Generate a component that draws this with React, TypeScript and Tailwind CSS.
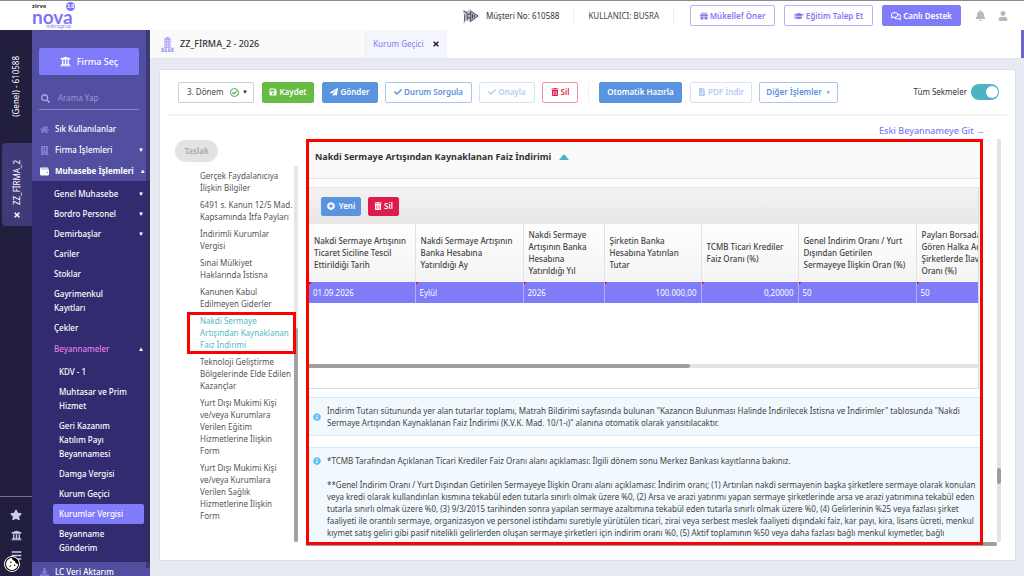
import type { ReactNode } from "react";
import {
  FaBars,
  FaBell,
  FaBuilding,
  FaCheck,
  FaCookieBite,
  FaDownload,
  FaFilePdf,
  FaGift,
  FaGraduationCap,
  FaHome,
  FaInfoCircle,
  FaPaperPlane,
  FaPlusCircle,
  FaRegCheckCircle,
  FaRegComments,
  FaSave,
  FaSearch,
  FaStar,
  FaTimes,
  FaTrashAlt,
  FaUniversity,
  FaUser,
  FaWallet,
} from "react-icons/fa";

const menu = [
  { label: "Genel Muhasebe", arrow: "▼" },
  { label: "Bordro Personel", arrow: "▼" },
  { label: "Demirbaşlar", arrow: "▼" },
  { label: "Cariler" },
  { label: "Stoklar" },
  { label: "Gayrimenkul Kayıtları" },
  { label: "Çekler" },
];

const declarations = [
  "KDV - 1",
  "Muhtasar ve Prim Hizmet",
  "Geri Kazanım Katılım Payı Beyannamesi",
  "Damga Vergisi",
  "Kurum Geçici",
  "Kurumlar Vergisi",
  "Beyanname Gönderim",
];

const sections = [
  "Gerçek Faydalanıcıya İlişkin Bilgiler",
  "6491 s. Kanun 12/5 Mad. Kapsamında İtfa Payları",
  "İndirimli Kurumlar Vergisi",
  "Sınai Mülkiyet Haklarında İstisna",
  "Kanunen Kabul Edilmeyen Giderler",
  "Nakdi Sermaye Artışından Kaynaklanan Faiz İndirimi",
  "Teknoloji Geliştirme Bölgelerinde Elde Edilen Kazançlar",
  "Yurt Dışı Mukimi Kişi ve/veya Kurumlara Verilen Eğitim Hizmetlerine İlişkin Form",
  "Yurt Dışı Mukimi Kişi ve/veya Kurumlara Verilen Sağlık Hizmetlerine İlişkin Form",
];

const columns = [
  { title: "Nakdi Sermaye Artışının Ticaret Siciline Tescil Ettirildiği Tarih", value: "01.09.2026", width: "w-[106px]" },
  { title: "Nakdi Sermaye Artışının Banka Hesabına Yatırıldığı Ay", value: "Eylül", width: "w-[108px]" },
  { title: "Nakdi Sermaye Artışının Banka Hesabına Yatırıldığı Yıl", value: "2026", width: "w-[81px]" },
  { title: "Şirketin Banka Hesabına Yatırılan Tutar", value: "100.000,00", width: "w-[97px]", right: true },
  { title: "TCMB Ticari Krediler Faiz Oranı (%)", value: "0,20000", width: "w-[97px]", right: true },
  { title: "Genel İndirim Oranı / Yurt Dışından Getirilen Sermayeye İlişkin Oran (%)", value: "50", width: "w-[118px]" },
  { title: "Payları\u00a0Borsada\u00a0İşlem Gören Halka\u00a0Açık Şirketlerde İlave Oranı\u00a0(%)", value: "50", width: "w-[86px]" },
];

function Button({ className, children, disabled }: { className: string; children: ReactNode; disabled?: boolean }) {
  return (
    <button
      type="button"
      disabled={disabled}
      className={`flex shrink-0 items-center justify-center gap-0.5 rounded-xs border font-semibold whitespace-nowrap ${className}`}>
      {children}
    </button>
  );
}

function Header() {
  return (
    <header className="flex h-[30px] shrink-0 items-center border-t border-[#8a8a8a] bg-white pr-4 pl-8">
      <a href="#" aria-label="zirve nova mikrogrup" className="relative flex h-7 w-[43px] flex-col text-[#7b76f5]">
        <span className="text-[6px] leading-[8px] font-bold text-[#333]">zirve</span>
        <span className="font-[Lato,sans-serif] text-[19px] leading-[13px] font-bold">nova</span>
        <span className="self-end pr-1 text-[5px] leading-[7px]">mikrogrup</span>
        <span className="absolute top-0 right-0 flex size-[9px] items-center justify-center rounded-full bg-[#7b76f5] text-[5px] leading-[6px] font-bold text-white">
          3.0
        </span>
      </a>

      <div className="ml-auto flex items-center">
        <svg viewBox="0 0 54 48" className="mr-1.5 h-4 w-[18px]">
          <path d="M3 6l12 4 9-6 27 20-27 20-6-9-6 2-4 9H4l3-18z" fill="#c4bdd2" />
          <path d="M5 10l10 4 1 24M8 20v20M26 10v30L48 24z" fill="none" stroke="#5a5265" strokeWidth="3" />
          <path d="M17 20l9-4M17 28l9 3M31 18v14M37 21v7" fill="none" stroke="#37303f" strokeWidth="3" />
        </svg>
        <span className="border-r border-[#eeeef3] py-1 pr-3.5 text-[#333]">Müşteri No: 610588</span>
        <span className="border-r border-[#eeeef3] px-3.5 py-1 text-[#444]">KULLANICI: BUSRA</span>
        <div className="ml-4 flex gap-[9px]">
          <Button className="h-[21px] w-[85px] border-[#b5b2fa] text-[#807bf8]">
            <FaGift /> Mükellef Öner
          </Button>
          <Button className="h-[21px] w-[89px] border-[#b5b2fa] text-[#807bf8]">
            <FaGraduationCap className="size-[10px]" /> Eğitim Talep Et
          </Button>
          <Button className="h-[21px] w-[79px] border-[#807bf8] bg-[#807bf8] text-white">
            <FaRegComments className="size-[10px]" /> Canlı Destek
          </Button>
        </div>
        <button type="button" aria-label="Bildirimler" className="ml-3.5 text-[#b4b9c6]">
          <FaBell className="size-[11px]" />
        </button>
        <button type="button" aria-label="Hesap" className="ml-3 text-[#b4b9c6]">
          <FaUser className="size-[10px]" />
        </button>
      </div>
    </header>
  );
}

function Rail() {
  return (
    <nav className="relative flex w-8 shrink-0 flex-col bg-[#211f3d] text-white">
      <a href="#" className="flex h-[113px] items-center justify-center">
        <span className="rotate-180 [writing-mode:vertical-rl]">(Genel) - 610588</span>
      </a>
      <div className="ml-0.5 flex h-[83px] flex-col items-center justify-end gap-1.5 rounded-l-sm bg-[#3f3b79] pb-[7px]">
        <span className="rotate-180 [writing-mode:vertical-rl]">ZZ_FİRMA_2</span>
        <button type="button" aria-label="Sekmeyi kapat">
          <FaTimes />
        </button>
      </div>
      <div className="mt-auto flex h-20 flex-col items-center gap-[9px] border-t border-[#77758c] pt-3 text-[#c9cbf5]">
        <FaStar className="size-3" />
        <FaUniversity className="size-[11px]" />
        <FaBars className="size-[11px]" />
      </div>
      <button
        type="button"
        aria-label="Çerezler"
        className="absolute bottom-1 left-1 flex size-4 items-center justify-center rounded-full border border-white bg-black">
        <FaCookieBite className="size-3" />
      </button>
    </nav>
  );
}

function Sidebar() {
  return (
    <aside className="relative w-[118px] shrink-0 overflow-hidden bg-[#534fa0] pt-[18px] leading-[14px] text-white">
      <div className="pr-[11px] pl-[7px]">
        <button
          type="button"
          className="flex h-[27px] w-full items-center justify-center gap-1.5 rounded-xs bg-[#807bf8] text-[9px] font-medium">
          <FaUniversity className="size-[11px]" /> Firma Seç
        </button>
        <label className="mt-3 mb-2 flex h-[23px] items-center gap-2 border-b border-[#8682c8] px-0.5 text-[#a9a6e0]">
          <FaSearch className="size-[9px] shrink-0" />
          <input type="text" placeholder="Arama Yap" className="w-full min-w-0 outline-none placeholder:text-[#9a97dc]" />
        </label>
      </div>

      <ul className="pr-1.5 pl-2 font-medium">
        <li className="flex items-center gap-1.5 pt-1 pb-[3px]">
          <FaHome className="size-[9px] text-[#8480d8]" />
          <a href="#">Sık Kullanılanlar</a>
        </li>
        <li className="flex items-center gap-1.5 pt-1 pb-[3px]">
          <FaBuilding className="size-[9px] text-[#8480d8]" />
          <a href="#">Firma İşlemleri</a>
          <span className="ml-auto text-[6px]">▼</span>
        </li>
        <li className="flex items-center gap-1.5 pt-1 pb-[3px] font-bold whitespace-nowrap">
          <FaWallet className="size-[9px] shrink-0" />
          <a href="#">Muhasebe İşlemleri</a>
          <span className="ml-auto text-[6px]">▲</span>
        </li>
      </ul>

      <ul className="bg-[#322b70] pt-[3px] pr-1.5 pb-1 pl-[22px] font-medium">
        {menu.map((item) => (
          <li key={item.label} className="flex items-center justify-between py-[3px]">
            <a href="#" className="max-w-[72px]">{item.label}</a>
            {item.arrow && <span className="text-[6px]">{item.arrow}</span>}
          </li>
        ))}
        <li>
          <div className="flex items-center justify-between pt-1 pb-[3px]">
            <a href="#" className="text-[#e27be8]">Beyannameler</a>
            <span className="text-[6px]">▲</span>
          </div>
          <ul className="-ml-px pt-[3px]">
            {declarations.map((label) => (
              <li key={label}>
                <a
                  href="#"
                  className={`block rounded-xs py-[3px] pr-2.5 pl-1.5 ${label === "Kurumlar Vergisi" ? "bg-[#807bf8]" : ""}`}>
                  {label}
                </a>
              </li>
            ))}
          </ul>
        </li>
      </ul>

      <a href="#" className="flex items-center gap-1.5 px-2 pt-[3px] pb-1 font-medium">
        <FaDownload className="size-[9px] text-[#8480d8]" />
        LC Veri Aktarım
      </a>
      {/* Scroll thumb */}
      <div className="absolute top-0 right-0 bottom-2 w-1 bg-[#2f2b58]/60" />
    </aside>
  );
}

function TabBar() {
  return (
    <div className="flex h-[29px] shrink-0 items-stretch border-b border-[#e2e3ea] border-l border-l-white bg-white">
      <div className="flex w-[215px] items-center gap-1.5 border-r border-[#eeeef3] bg-[#fafafa] pl-2.5 text-[9px] font-medium text-[#333]">
        <svg viewBox="0 0 39 45" className="h-[15px] w-[13px]" fill="#b0acf5">
          <path d="M10 4h5V0h9v4h5v29H10z" />
          <path d="M1 32h8v9H1zm29 0h8v9h-8zM0 42h39v3H0zM11 34h7v8h-7zm10 0h7v8h-7z" />
          <path d="M13 9h3v4h-3zm5 0h3v4h-3zm5 0h3v4h-3zm-10 8h3v4h-3zm5 0h3v4h-3zm5 0h3v4h-3zm-10 8h3v4h-3zm5 0h3v4h-3zm5 0h3v4h-3z" fill="#e3e1fd" />
        </svg>
        ZZ_FİRMA_2 - 2026
      </div>
      <div className="flex items-center gap-2 bg-[#f5f6fd] px-[7px] font-medium text-[#8d89f5]">
        Kurum Geçici
        <button type="button" aria-label="Kapat" className="text-[#222]">
          <FaTimes />
        </button>
      </div>
      <div className="ml-auto w-[3px] bg-[#6c67c4]" />
    </div>
  );
}

function Toolbar() {
  return (
    <div className="mx-2 flex h-[46px] shrink-0 items-center gap-[7px] border-b-2 border-[#f3f3f5] pr-2 pl-2.5">
      <div className="relative mr-px flex items-center">
        <select
          aria-label="Dönem"
          className="h-[21px] w-[76px] appearance-none rounded-xs border border-[#cfcfcf] bg-white pl-2 text-[#444]">
          <option>3. Dönem</option>
        </select>
        <FaRegCheckCircle className="pointer-events-none absolute right-[15px] size-[9px] text-[#3a9a3a]" />
        <span className="pointer-events-none absolute right-1.5 text-[6px] text-[#333]">▼</span>
      </div>
      <Button className="mr-px h-[21px] w-[52px] border-[#66bc45] bg-[#66bc45] text-white">
        <FaSave /> Kaydet
      </Button>
      <Button className="h-[21px] w-14 border-[#5a93de] bg-[#5a93de] text-white">
        <FaPaperPlane /> Gönder
      </Button>
      <Button className="h-[21px] w-[87px] border-[#a9c6f0] text-[#5a93de]">
        <FaCheck /> Durum Sorgula
      </Button>
      <Button disabled className="h-[21px] w-14 border-[#d5e3f7] text-[#b3cdf1]">
        <FaCheck /> Onayla
      </Button>
      <Button className="h-[21px] w-9 border-[#f094aa] text-[#dc2450]">
        <FaTrashAlt /> Sil
      </Button>
      <div className="mx-[3px] h-5 w-px bg-[#f0f0f0]" />
      <Button className="mr-px h-[21px] w-[83px] border-[#5a93de] bg-[#5a93de] text-white">Otomatik Hazırla</Button>
      <Button disabled className="h-[21px] w-[62px] border-[#d5e3f7] text-[#b3cdf1]">
        <FaFilePdf /> PDF İndir
      </Button>
      <Button className="h-[21px] w-[79px] border-[#a9c6f0] text-[#5a93de]">
        Diğer İşlemler <span className="ml-0.5 text-[5px]">▼</span>
      </Button>
      <label className="ml-auto flex items-center gap-1 whitespace-nowrap text-[#333]">
        Tüm Sekmeler
        <input
          type="checkbox"
          defaultChecked
          className="relative h-4 w-7 appearance-none rounded-full bg-[#4cb3c5] before:absolute before:top-[2px] before:right-px before:size-3 before:rounded-full before:bg-white"
        />
      </label>
    </div>
  );
}

function SectionList() {
  return (
    <div className="flex w-[138px] shrink-0 flex-col pt-px">
      <span className="ml-[15px] flex h-[22px] w-[43px] shrink-0 items-center justify-center rounded-full bg-[#e3e3e3] font-semibold text-[#a5a5a5]">
        Taslak
      </span>
      <div className="mt-1 flex min-h-0 flex-1 justify-between">
        <ul className="ml-10 flex w-[93px] flex-col gap-[5px] pt-1 leading-[12px] text-[#555]">
          {sections.map((label, i) => (
            <li key={label} className="relative">
              <a href="#" className={i === 5 ? "text-[#53b9ca]" : ""}>{label}</a>
              {i === 5 && <span className="absolute -inset-y-[3px] -right-[3px] -left-[13px] z-10 border-[3px] border-[#fe0000]" />}
            </li>
          ))}
        </ul>
        <div className="mb-1 flex w-1 shrink-0 flex-col justify-end bg-[#e6e6e6]">
          <div className="h-[57%] rounded-full bg-[#a0a0a0]" />
        </div>
      </div>
    </div>
  );
}

function Grid() {
  return (
    <div className="mr-px border-r border-b border-[#dddddd]">
      <div className="flex h-[37px] items-center gap-[7px] border-t border-[#e4e4e4] bg-linear-to-b from-[#f3f3f3] to-[#e8e7e8] pl-3">
        <Button className="h-[19px] w-10 border-[#5a93de] bg-[#5a93de] text-white">
          <FaPlusCircle className="mr-0.5" /> Yeni
        </Button>
        <Button className="h-[19px] w-[31px] border-[#dc1c4c] bg-[#dc1c4c] text-white">
          <FaTrashAlt /> Sil
        </Button>
      </div>
      <div className="h-[140px] overflow-hidden">
        <table className="w-[693px] table-fixed border-collapse text-left">
          <thead>
            <tr className="h-[58px] bg-linear-to-b from-[#fefefe] to-[#f4f4f4]">
              {columns.map((c) => (
                <th
                  key={c.title}
                  className={`border-r border-[#e2e2e2] px-[5px] leading-[12px] font-medium text-[#444] ${c.width}`}>
                  {c.title}
                </th>
              ))}
            </tr>
          </thead>
          <tbody>
            <tr className="h-[21px] bg-[#807bf8] text-white">
              {columns.map((c) => (
                <td key={c.title} className={`relative border-r border-[#b3b0fb] px-1 ${c.right ? "text-right" : ""}`}>
                  <span className="absolute top-0 left-0 size-[3px] bg-[#fe0000] [clip-path:polygon(0_0,100%_0,0_100%)]" />
                  {c.value}
                </td>
              ))}
            </tr>
          </tbody>
        </table>
      </div>
      <div className="h-1 bg-[#e4e4e4]">
        <div className="h-1 w-[57%] rounded-r-full bg-[#9e9e9e]" />
      </div>
      <div className="h-5" />
    </div>
  );
}

function Info({ children }: { children: ReactNode }) {
  return (
    <div className="flex shrink-0 items-center gap-1.5 border-y border-[#d3ecf9] bg-[#f1f9fe] pt-[7px] pr-1 pb-1.5 pl-1 leading-[12px] text-[#444]">
      {children}
    </div>
  );
}

function Detail() {
  return (
    <section className="flex min-w-0 flex-1 flex-col">
      <div className="relative z-10 mr-3.5 flex min-h-0 flex-1 flex-col overflow-hidden border-[3px] border-[#fe0000] bg-white">
        <h2 className="flex h-[37px] shrink-0 items-center gap-2 border-b border-[#e4e4e4] bg-[#f9f9f9] pb-1.5 pl-1.5 text-[9px] font-bold text-[#333]">
          Nakdi Sermaye Artışından Kaynaklanan Faiz İndirimi
          <svg viewBox="0 0 10 6" className="h-1.5 w-2.5" fill="#4cb3c5">
            <path d="M0 6l4-5q1-1 2 0l4 5z" />
          </svg>
        </h2>
        <div className="h-2 shrink-0" />
        <Grid />
        <div className="mt-2 mb-[11px]">
          <Info>
            <FaInfoCircle className="size-2 shrink-0 text-[#62c0f5]" />
            <p>
              İndirim Tutarı sütununda yer alan tutarlar toplamı, Matrah Bildirimi sayfasında bulunan "Kazancın Bulunması
              Halinde İndirilecek İstisna ve İndirimler" tablosunda "Nakdi Sermaye Artışından Kaynaklanan Faiz İndirimi
              (K.V.K. Mad. 10/1-ı)" alanına otomatik olarak yansıtılacaktır.
            </p>
          </Info>
        </div>
        <Info>
          <FaInfoCircle className="mt-0.5 size-2 shrink-0 self-start text-[#62c0f5]" />
          <div>
            <p>*TCMB Tarafından Açıklanan Ticari Krediler Faiz Oranı alanı açıklaması: İlgili dönem sonu Merkez Bankası kayıtlarına bakınız.</p>
            <p className="mt-3">
              **Genel İndirim Oranı / Yurt Dışından Getirilen Sermayeye İlişkin Oranı alanı açıklaması: İndirim oranı; (1)
              Artırılan nakdi sermayenin başka şirketlere sermaye olarak konulan veya kredi olarak kullandırılan kısmına
              tekabül eden tutarla sınırlı olmak üzere %0, (2) Arsa ve arazi yatırımı yapan sermaye şirketlerinde arsa ve
              arazi yatırımına tekabül eden tutarla sınırlı olmak üzere %0, (3) 9/3/2015 tarihinden sonra yapılan sermaye
              azaltımına tekabül eden tutarla sınırlı olmak üzere %0, (4) Gelirlerinin %25 veya fazlası şirket faaliyeti ile
              orantılı sermaye, organizasyon ve personel istihdamı suretiyle yürütülen ticari, zirai veya serbest meslek
              faaliyeti dışındaki faiz, kar payı, kira, lisans ücreti, menkul kıymet satış geliri gibi pasif nitelikli
              gelirlerden oluşan sermaye şirketleri için indirim oranı %0, (5) Aktif toplamının %50 veya daha fazlası bağlı
              menkul kıymetler, bağlı
            </p>
          </div>
        </Info>
      </div>
      {/* Horizontal scrollbar */}
      <div className="-mt-[3px] h-1 rounded-r-full bg-[#9e9e9e]" />
    </section>
  );
}

export default function App() {
  return (
    <div className="flex h-screen flex-col overflow-hidden font-['Noto_Sans',sans-serif] text-[8px] leading-[12px]">
      <Header />
      <div className="flex min-h-0 flex-1">
        <Rail />
        <Sidebar />
        <main className="flex min-w-0 flex-1 flex-col bg-[#e8eaf3]">
          <TabBar />
          <div className="mt-2.5 mr-2 mb-[15px] ml-[9px] flex min-h-0 flex-1 flex-col rounded-xs border border-[#dcdee6] bg-white">
            <Toolbar />
            <a href="#" className="mt-[9px] mr-[30px] self-end text-[9px] font-medium text-[#807bf8]">
              Eski Beyannameye Git →
            </a>
            <div className="mt-0.5 mb-[14px] flex min-h-0 flex-1">
              <SectionList />
              <div className="flex min-w-0 flex-1 pl-2">
                <Detail />
                {/* Vertical scrollbar */}
                <div className="mr-3.5 mb-1 flex w-1 flex-col bg-[#e4e4e4]">
                  <div className="mt-auto mb-[58px] h-4 rounded-full bg-[#9e9e9e]" />
                </div>
              </div>
            </div>
          </div>
        </main>
      </div>
    </div>
  );
}
